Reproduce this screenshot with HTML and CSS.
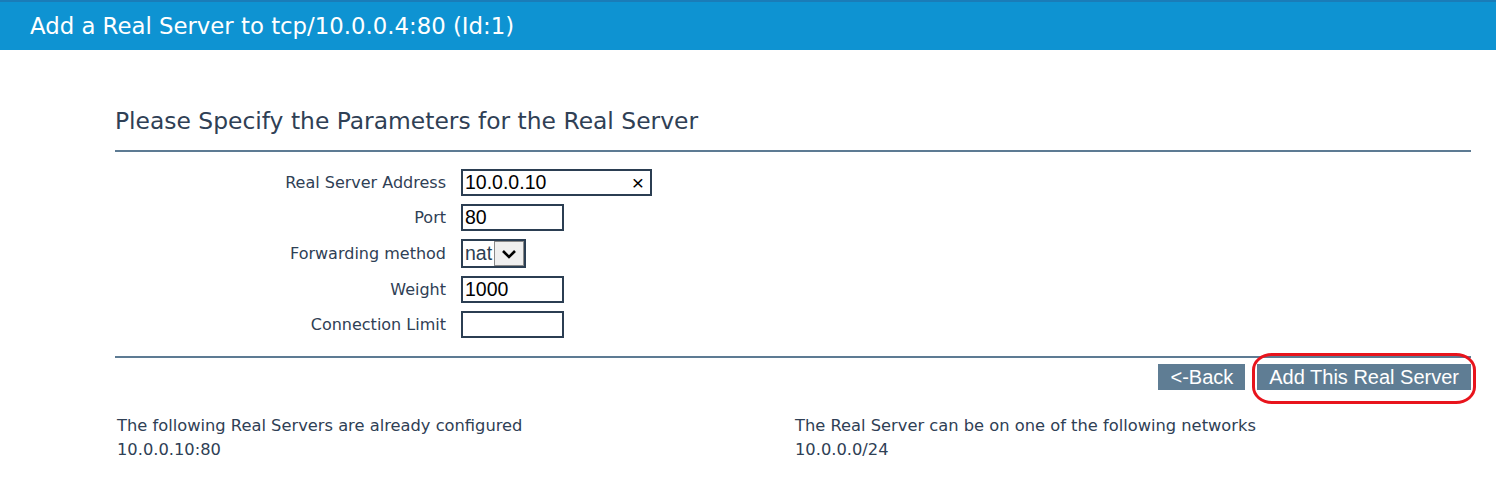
FILE: index.html
```html
<!DOCTYPE html>
<html>
<head>
<meta charset="utf-8">
<link rel="stylesheet" href="styles.css">
</head>
<body>
<div class="topbar">Add a Real Server to tcp/10.0.0.4:80 (Id:1)</div>
<div class="content">
  <h2 class="section-title">Please Specify the Parameters for the Real Server</h2>
  <hr class="rule">
  <form class="params">
    <label class="lbl">Real Server Address</label>
    <div class="field"><span class="input wide">10.0.0.10<span class="clear">×</span></span></div>
    <label class="lbl">Port</label>
    <div class="field"><span class="input">80</span></div>
    <label class="lbl">Forwarding method</label>
    <div class="field"><span class="select">nat<span class="arrow"><svg width="16" height="12" viewBox="0 0 16 12"><path d="M2 3 L8 9 L14 3" fill="none" stroke="#000" stroke-width="2.6"/></svg></span></span></div>
    <label class="lbl">Weight</label>
    <div class="field"><span class="input">1000</span></div>
    <label class="lbl">Connection Limit</label>
    <div class="field"><span class="input"></span></div>
  </form>
  <hr class="rule rule2">
  <div class="actions">
    <button class="btn" type="button">&lt;-Back</button>
    <span class="highlight-wrap"><button class="btn" type="button">Add This Real Server</button><span class="highlight"></span></span>
  </div>
  <div class="info">
    <div class="info-col">
      <div>The following Real Servers are already configured</div>
      <div>10.0.0.10:80</div>
    </div>
    <div class="info-col">
      <div>The Real Server can be on one of the following networks</div>
      <div>10.0.0.0/24</div>
    </div>
  </div>
</div>
</body>
</html>
```

FILE: styles.css
```css
html, body {
  margin: 0;
  padding: 0;
  background: #fff;
}
body {
  font-family: "DejaVu Sans", "Noto Sans", sans-serif;
  color: #2f4055;
}
.topbar {
  height: 48px;
  border-top: 2px solid #1a7cb8;
  background: #0e93d2;
  color: #fff;
  font-size: 22.8px;
  line-height: 48px;
  padding-left: 30px;
  margin-right: 2px;
}
.content {
  margin-left: 115px;
  width: 1356px;
}
.section-title {
  margin: 0;
  padding-top: 55px;
  font-weight: normal;
  font-size: 23.4px;
  line-height: 32px;
  color: #2f4055;
}
.rule {
  margin: 13px 0 0 0;
  border: 0;
  height: 2px;
  background: #5d7b93;
}
.params {
  display: grid;
  grid-template-columns: 331px auto;
  column-gap: 15px;
  row-gap: 8px;
  margin-top: 17px;
  align-items: center;
}
.lbl {
  text-align: right;
  font-size: 16px;
}
.field {
  display: flex;
}
.input {
  box-sizing: border-box;
  width: 103px;
  height: 27px;
  border: 2px solid #2b3e52;
  font-family: "Liberation Sans", Arial, sans-serif;
  font-size: 19.5px;
  line-height: 23px;
  padding-left: 2px;
  color: #000;
  display: flex;
  align-items: center;
}
.input.wide {
  width: 191px;
}
.clear {
  margin-left: auto;
  margin-right: 6px;
  font-size: 21px;
}
.select {
  box-sizing: border-box;
  height: 29px;
  border: 2px solid #2b3e52;
  font-family: "Liberation Sans", Arial, sans-serif;
  font-size: 19.5px;
  color: #2b3e52;
  display: flex;
  align-items: center;
  padding-left: 2px;
}
.arrow {
  box-sizing: border-box;
  margin-left: 2px;
  width: 30px;
  height: 25px;
  background: #efefef;
  border: 1px solid #8a8a8a;
  display: flex;
  align-items: center;
  justify-content: center;
}
.rule2 {
  margin-top: 18px;
}
.actions {
  display: flex;
  justify-content: flex-end;
  gap: 12px;
  margin-top: 6px;
}
.btn {
  background: #5f7d94;
  color: #fff;
  border: 0;
  font-family: "Liberation Sans", Arial, sans-serif;
  font-size: 20px;
  height: 26px;
  padding: 0 12px;
  line-height: 26px;
}
.highlight-wrap {
  position: relative;
  display: flex;
}
.highlight {
  position: absolute;
  left: -5px;
  right: -5px;
  top: -11px;
  bottom: -14px;
  border: 3px solid #e8141c;
  border-radius: 20px / 17px;
  pointer-events: none;
}
.info {
  display: grid;
  grid-template-columns: 678px auto;
  margin-top: 24px;
  padding-left: 2px;
  font-size: 16.3px;
  line-height: 24px;
}
```
